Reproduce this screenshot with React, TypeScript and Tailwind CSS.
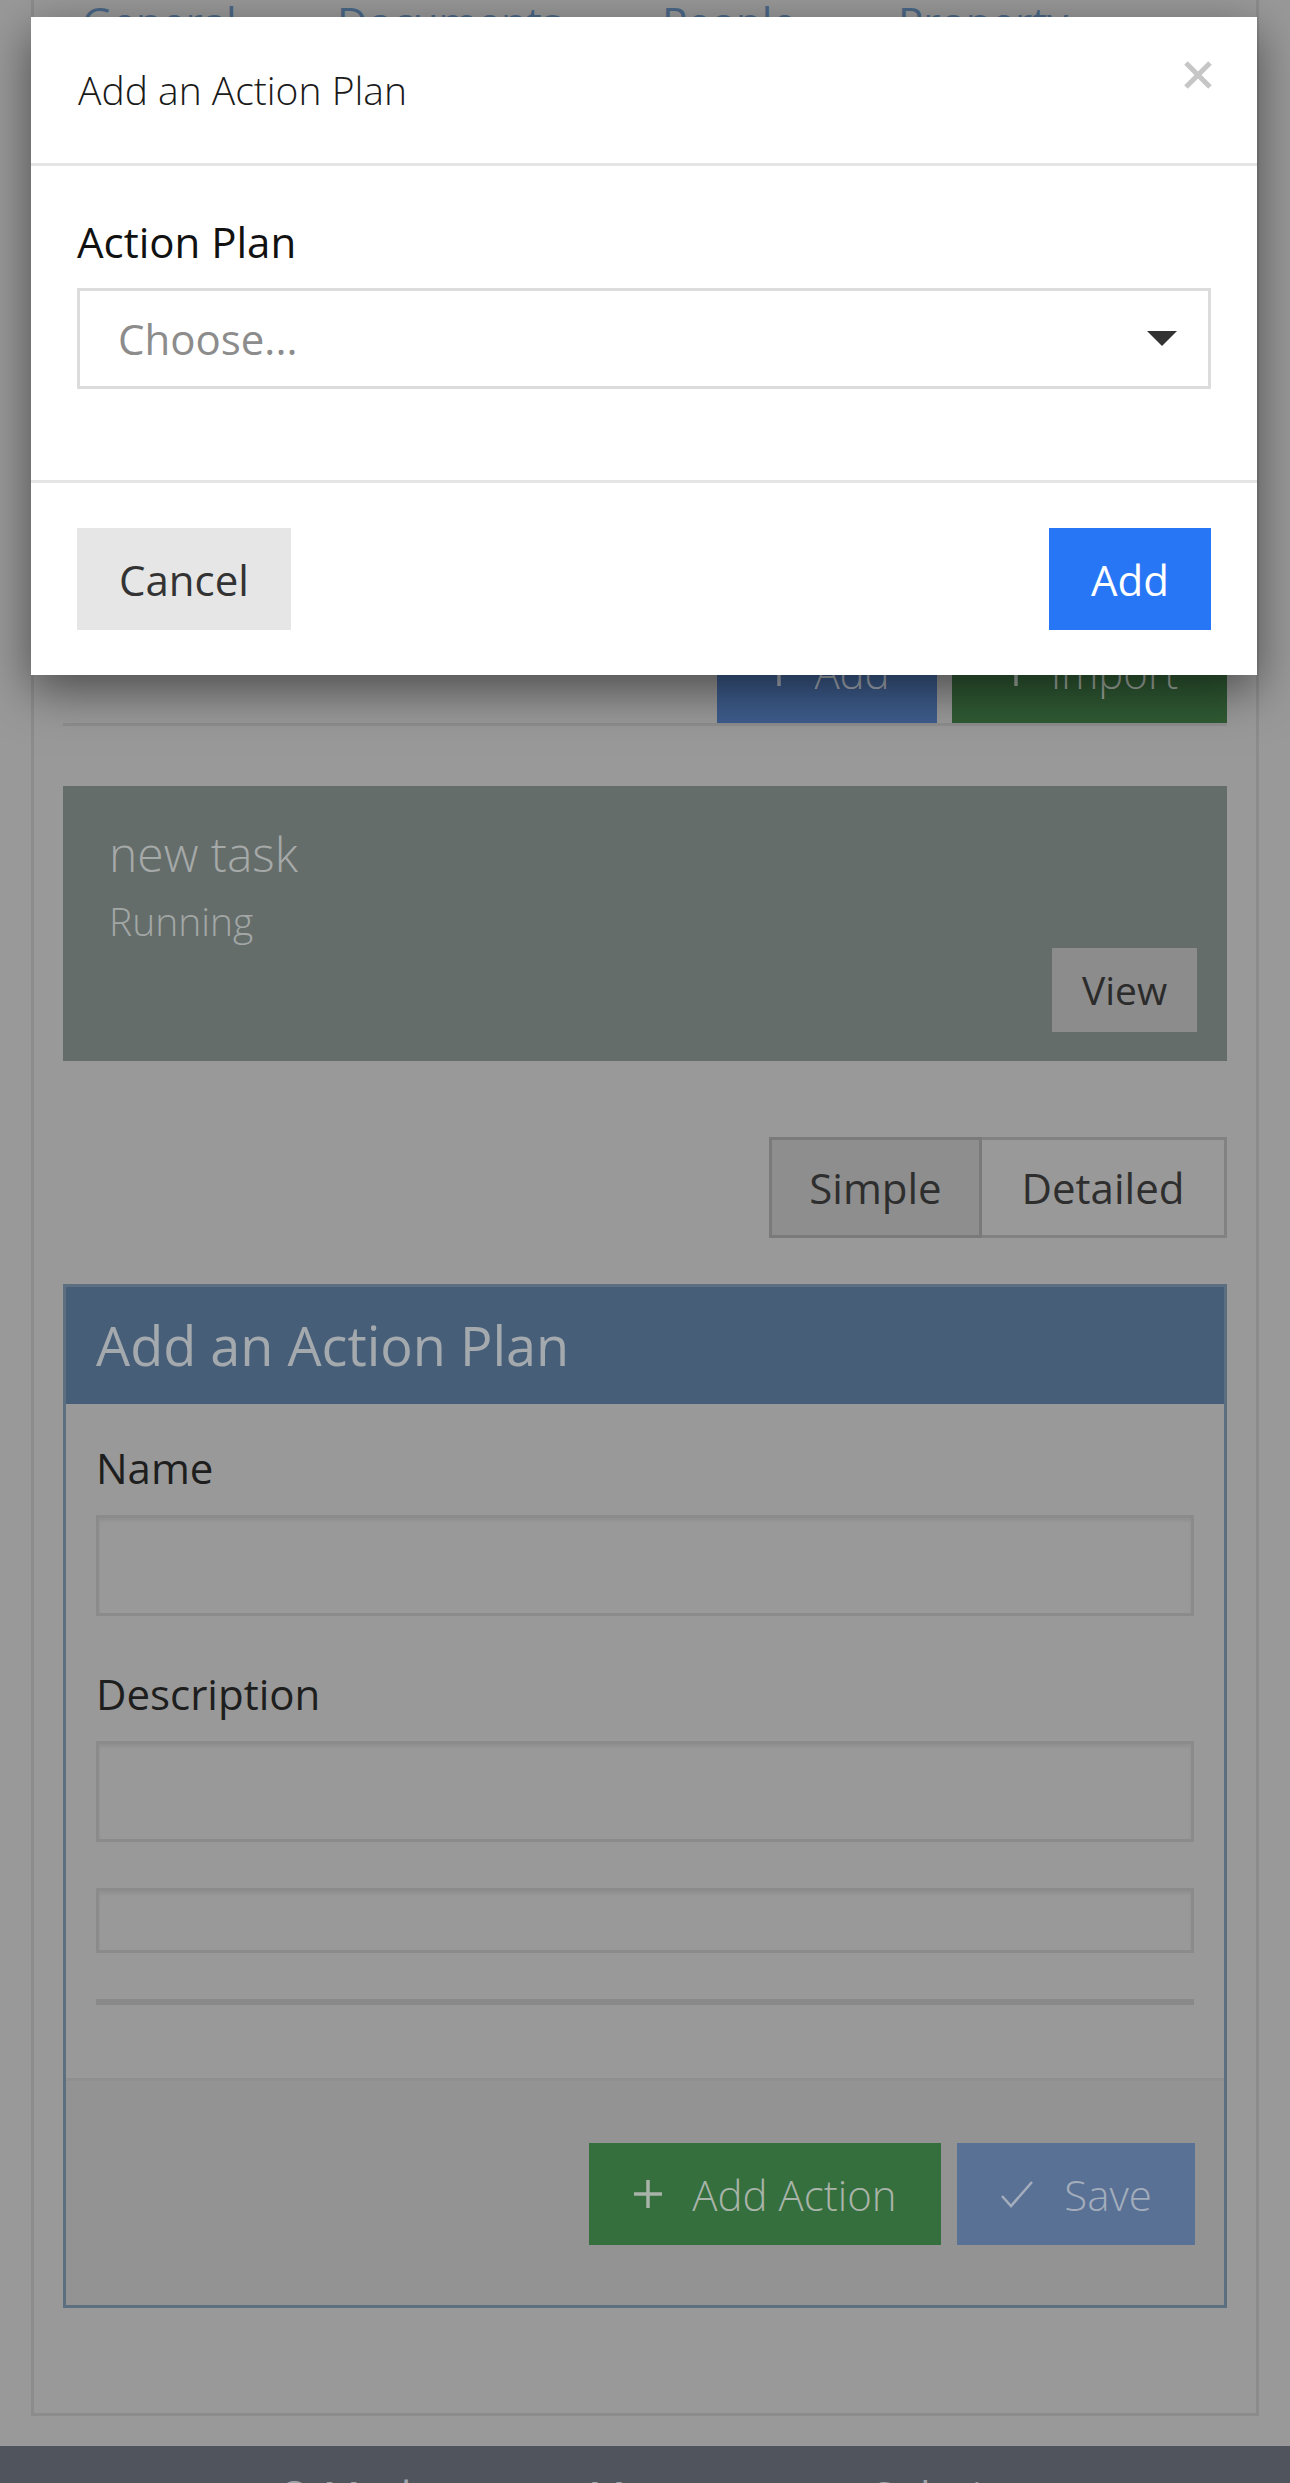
import React from "react";

const tabs = [
  { label: "General", w: "w-[255px]" },
  { label: "Documents", w: "w-[325px]" },
  { label: "People", w: "w-[236px]" },
  { label: "Property", w: "w-[200px]" },
];

function PlusIcon({ className }: { className?: string }) {
  return (
    <svg width="30" height="30" viewBox="0 0 30 30" className={className}>
      <path d="M15 1v28M1 15h28" stroke="currentColor" strokeWidth="3.5" fill="none" />
    </svg>
  );
}

function CheckIcon({ className }: { className?: string }) {
  return (
    <svg width="34" height="28" viewBox="0 0 34 28" className={className}>
      <path d="M2 16l9 10L32 2" stroke="currentColor" strokeWidth="2.5" fill="none" />
    </svg>
  );
}

function Field({ label, h = "h-[101px]" }: { label?: string; h?: string }) {
  return (
    <div>
      {label && (
        <div className="text-[42px] leading-[63px] text-[#1e1e1e]">{label}</div>
      )}
      <div
        className={`${label ? "mt-[16px]" : ""} ${h} border-[3px] border-[#8b8b8b] shadow-[inset_0_3px_3px_rgba(0,0,0,0.06)]`}
      />
    </div>
  );
}

export default function App() {
  return (
    <div className="relative h-[2483px] overflow-hidden bg-[#999999] font-['Open_Sans','Liberation_Sans',sans-serif]">
      {/* page behind the dialog */}
      <div className="mx-[31px] border-x-[3px] border-b-[3px] border-[#8c8c8c] px-[29px] pb-[105px]">
        <div className="-mt-[10px] flex pl-[19px] text-[42px] leading-[63px] text-[#4a6888]">
          {tabs.map((t) => (
            <span key={t.label} className={t.w}>
              {t.label}
            </span>
          ))}
        </div>

        <div className="mt-[568px] flex justify-end gap-[15px] border-b-[3px] border-[#8d8d8d]">
          <div className="flex h-[102px] w-[220px] items-center justify-center gap-[20px] bg-[#3d5c8c] text-[42px] font-light text-[#a9b0ba]">
            <PlusIcon />
            <span>Add</span>
          </div>
          <div className="flex h-[102px] w-[275px] items-center justify-center gap-[20px] bg-[#2f5a33] text-[42px] font-light text-[#a3ada4]">
            <PlusIcon />
            <span>Import</span>
          </div>
        </div>

        <div className="mt-[60px] flex flex-col bg-[#656d6b] pb-[29px] pl-[46px] pr-[30px] pt-[41px]">
          <div className="text-[48px] font-light leading-[54px] text-[#a5a9a8]">new task</div>
          <div className="mt-[13px] text-[39px] font-light leading-[54px] text-[#a2a7a6]">Running</div>
          <div className="flex justify-end">
            <div className="flex h-[84px] w-[145px] items-center justify-center bg-[#8c8c8c] text-[39px] text-[#2b2b2b]">
              View
            </div>
          </div>
        </div>

        <div className="mt-[76px] flex justify-end">
          <div className="flex h-[101px] text-[42px] text-[#2e2e2e]">
            <div className="flex w-[213px] items-center justify-center border-[3px] border-[#7a7a7a] bg-[#8e8e8e]">
              Simple
            </div>
            <div className="flex w-[245px] items-center justify-center border-y-[3px] border-r-[3px] border-[#828282]">
              Detailed
            </div>
          </div>
        </div>

        <div className="mt-[46px] border-[3px] border-[#5b6f80]">
          <div className="flex h-[117px] items-center bg-[#465e78] px-[30px] text-[54px] text-[#a4a9ae]">
            Add an Action Plan
          </div>
          <div className="px-[30px] pb-[73px] pt-[32px]">
            <Field label="Name" />
            <div className="mt-[46px]">
              <Field label="Description" />
            </div>
            <div className="mt-[46px]">
              <Field h="h-[65px]" />
            </div>
            <div className="mt-[46px] h-[6px] bg-[#898989]" />
          </div>
          <div className="flex justify-end gap-[16px] border-t-[3px] border-[#8f8f8f] bg-[#939393] pb-[60px] pr-[29px] pt-[62px]">
            <div className="flex h-[102px] w-[352px] items-center justify-center gap-[29px] bg-[#356f3d] text-[42px] font-light text-[#a8b3a9]">
              <PlusIcon />
              <span>Add Action</span>
            </div>
            <div className="flex h-[102px] w-[238px] items-center justify-center gap-[30px] bg-[#5a7196] text-[42px] font-light text-[#a3adbb]">
              <CheckIcon />
              <span>Save</span>
            </div>
          </div>
        </div>
      </div>

      <div className="mt-[30px] flex h-[60px] justify-center gap-[110px] bg-[#50545c] pl-[40px] pt-[18px] text-[42px] leading-[63px] text-[#9fa3aa]">
        <span>© Modern</span>
        <span>Manager</span>
        <span>Solutions</span>
      </div>

      {/* dialog */}
      <div className="absolute left-[31px] top-[17px] w-[1226px] bg-white shadow-[0_15px_45px_rgba(0,0,0,0.5)]">
        <div className="flex h-[149px] items-center justify-between border-b-[3px] border-[#e5e5e5] pl-[47px] pr-[44px]">
          <span className="text-[39px] font-light text-[#1a1a1a]">Add an Action Plan</span>
          <svg width="30" height="30" viewBox="0 0 30 30" className="-mt-[30px] text-[#c6c6c6]">
            <path d="M3 3l24 24M27 3L3 27" stroke="currentColor" strokeWidth="5" fill="none" />
          </svg>
        </div>
        <div className="px-[46px] pb-[91px] pt-[44px]">
          <div className="text-[42px] leading-[63px] text-[#111111]">Action Plan</div>
          <div className="mt-[15px] flex h-[101px] items-center justify-between border-[3px] border-[#dcdcdc] pl-[38px] pr-[31px]">
            <span className="text-[42px] text-[#8c8c8c]">Choose...</span>
            <svg width="30" height="15" viewBox="0 0 30 15" className="text-[#333333]">
              <path d="M0 0h30L15 15z" fill="currentColor" />
            </svg>
          </div>
        </div>
        <div className="flex justify-between border-t-[3px] border-[#e5e5e5] px-[46px] py-[45px]">
          <button className="flex h-[102px] w-[214px] items-center justify-center bg-[#e6e6e6] text-[42px] text-[#333333]">
            Cancel
          </button>
          <button className="flex h-[102px] w-[162px] items-center justify-center bg-[#2776f5] text-[42px] text-white">
            Add
          </button>
        </div>
      </div>
    </div>
  );
}
